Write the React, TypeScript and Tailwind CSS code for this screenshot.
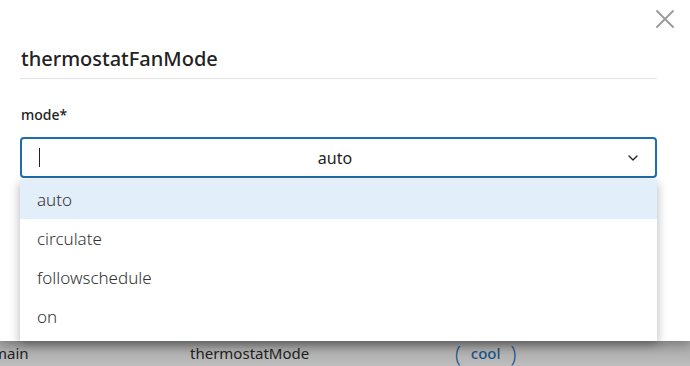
import { ChevronDown } from "lucide-react";

const options = ["auto", "circulate", "followschedule", "on"];

function OptionItem({ text, active }: { text: string; active: boolean }) {
    return (
        <li className={`h-[39px] flex items-center pl-[17px] ${active ? "bg-[#e2eef9]" : "bg-white"}`}>
            <span className="text-[17px] font-light text-[#333]">{text}</span>
        </li>
    );
}

function ModeSelect() {
    return (
        <div className="relative">
            <div className="h-[41px] border-2 border-[#1c6ead] rounded-[4px] flex items-center pl-[17px] pr-[14px] bg-white">
                <span className="w-px h-[19px] bg-[#222]"></span>
                <span className="flex-1 text-center text-[16px] text-[#222] pl-[5px]">auto</span>
                <ChevronDown className="size-[16px] text-[#222]" strokeWidth={2} />
            </div>
            <ul className="absolute left-0 right-0 top-[43px] bg-white shadow-[0_3px_10px_rgba(0,0,0,0.3)] z-10 pb-[5px]">
                {options.map(o => <OptionItem key={o} text={o} active={o === "auto"} />)}
            </ul>
        </div>
    );
}

export default function App() {
    return (
        <div className="w-[690px] h-[366px] overflow-hidden bg-[#b4b4b4] flex flex-col" style={{ fontFamily: '"Noto Sans", sans-serif' }}>
            <div className="h-[341px] bg-white relative shrink-0 px-[20px] pr-[33px] pt-[45px] shadow-[0_4px_10px_rgba(0,0,0,0.25)] z-10">
                <button className="absolute right-[16px] top-[10px] text-[#9a9a9a]">
                    <svg viewBox="0 0 18 18" className="size-[18px]" fill="none" stroke="currentColor" strokeWidth={1.8} strokeLinecap="round">
                        <path d="M1 1L17 17M17 1L1 17" />
                    </svg>
                </button>
                <h2 className="text-[20px] font-medium text-[#222] pl-px pb-[5px] border-b border-[#e2e2e2] leading-[28px]">thermostatFanMode</h2>
                <div className="mt-[26px] pl-px text-[14px] font-medium text-[#222] leading-[20px]">mode*</div>
                <div className="mt-[12px]">
                    <ModeSelect />
                </div>
            </div>
            <div className="flex-1 flex items-center text-[15px] text-[#222] bg-gradient-to-b from-[#a6a6a6] to-[#bdbdbd]">
                <span className="w-[197px] -ml-[7px] shrink-0">main</span>
                <span className="w-[265px] shrink-0">thermostatMode</span>
                <span className="flex items-center gap-[10px] text-[#1a5383] font-medium">
                    <span className="text-[21px] font-light leading-[24px]">(</span>
                    <span>cool</span>
                    <span className="text-[21px] font-light leading-[24px]">)</span>
                </span>
            </div>
        </div>
    );
}
